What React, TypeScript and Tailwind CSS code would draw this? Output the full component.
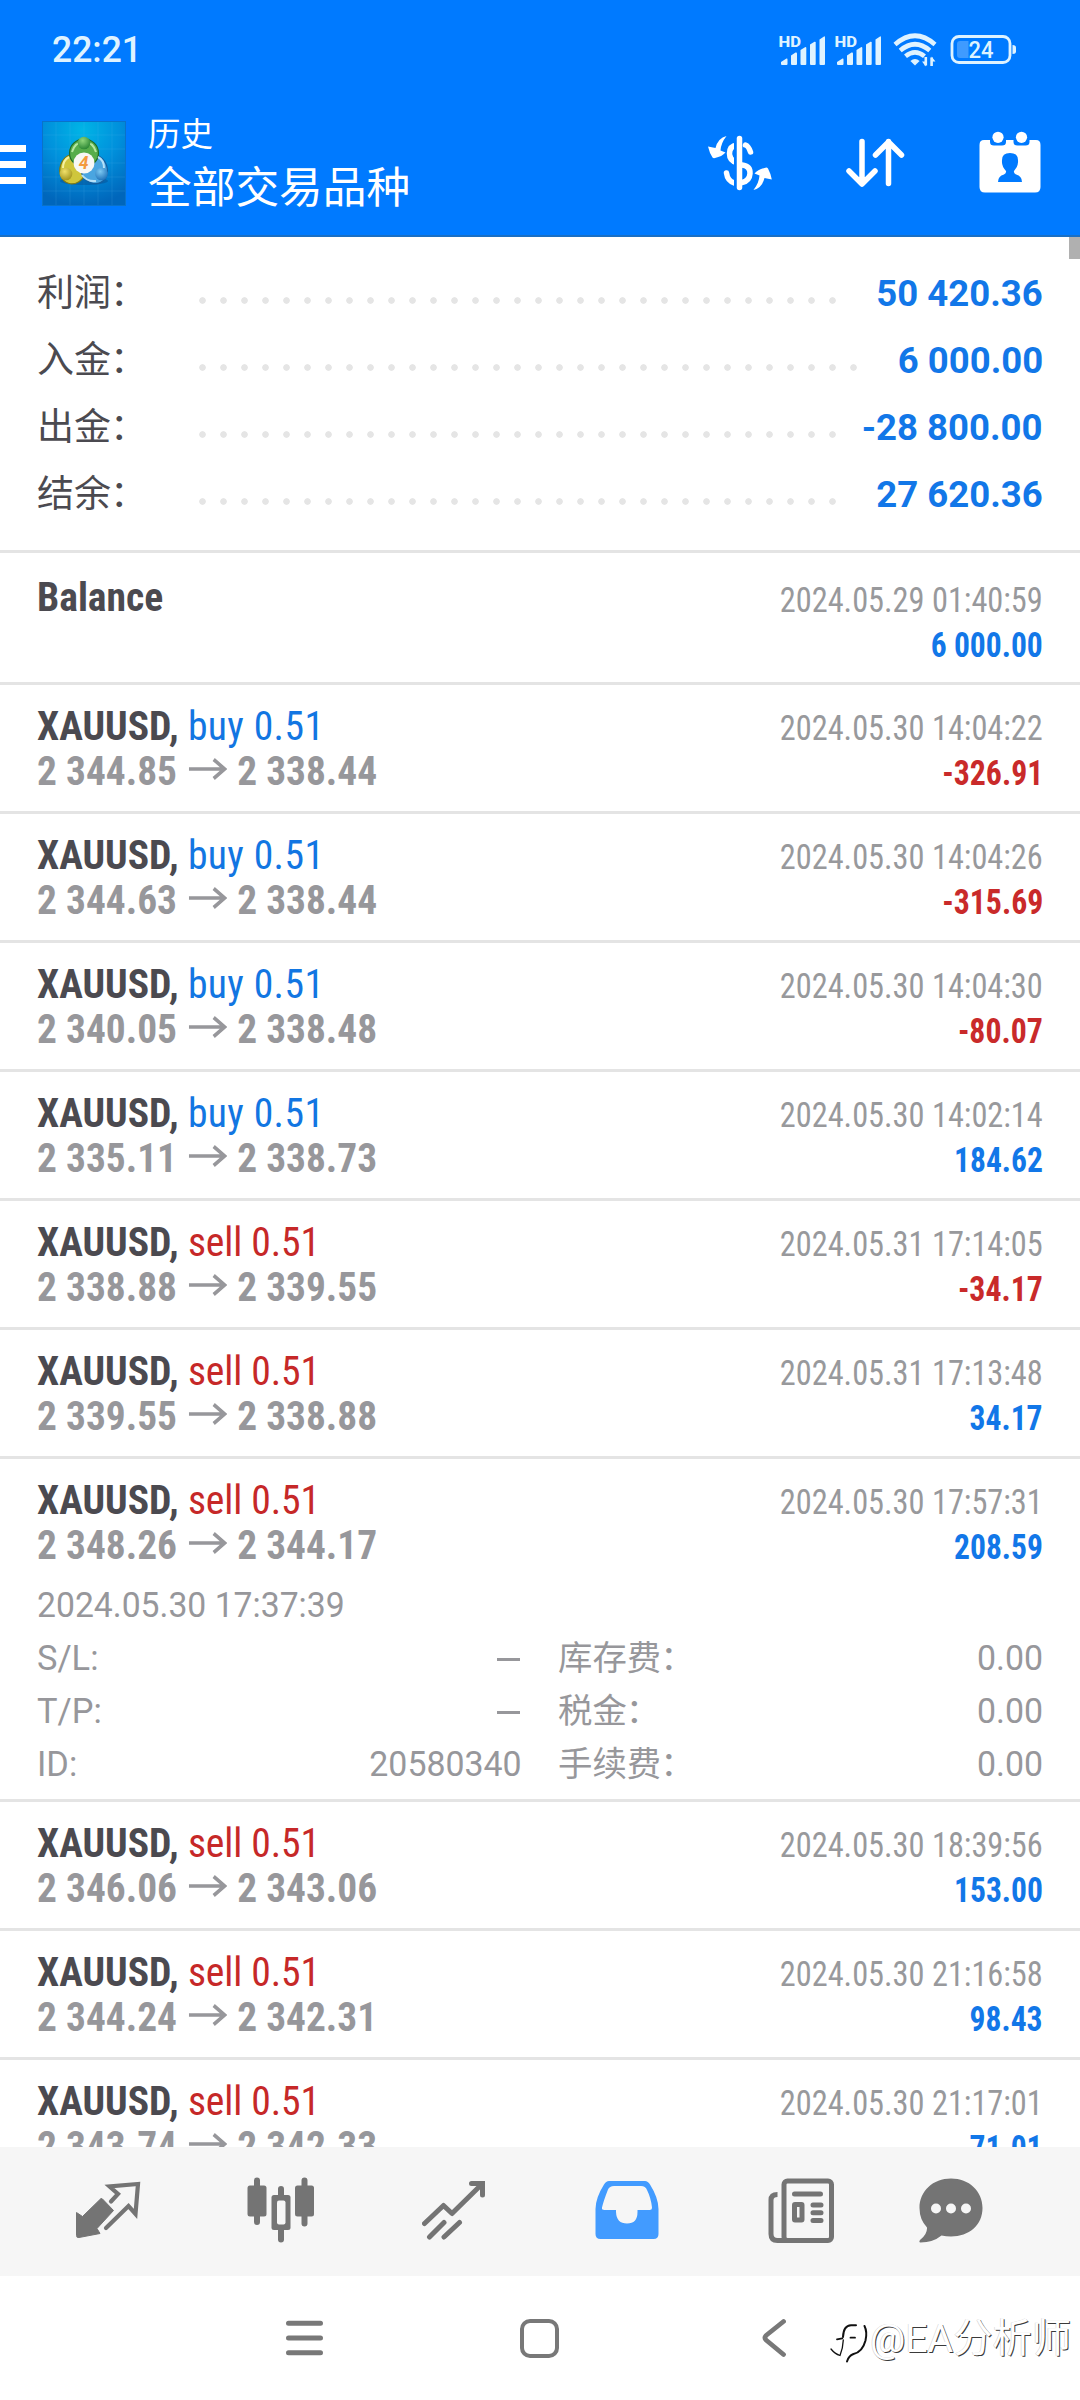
import React from "react";

type Kind = "buy" | "sell";
interface Deal {
  kind: Kind;
  from: string;
  to: string;
  date: string;
  profit: string;
  details?: boolean;
}

const summary = [
  { label: "利润", value: "50 420.36", width: "w-[651px]" },
  { label: "入金", value: "6 000.00", width: "w-[672px]" },
  { label: "出金", value: "-28 800.00", width: "w-[651px]" },
  { label: "结余", value: "27 620.36", width: "w-[651px]" },
];

const deals: Deal[] = [
  { kind: "buy", from: "2 344.85", to: "2 338.44", date: "2024.05.30 14:04:22", profit: "-326.91" },
  { kind: "buy", from: "2 344.63", to: "2 338.44", date: "2024.05.30 14:04:26", profit: "-315.69" },
  { kind: "buy", from: "2 340.05", to: "2 338.48", date: "2024.05.30 14:04:30", profit: "-80.07" },
  { kind: "buy", from: "2 335.11", to: "2 338.73", date: "2024.05.30 14:02:14", profit: "184.62" },
  { kind: "sell", from: "2 338.88", to: "2 339.55", date: "2024.05.31 17:14:05", profit: "-34.17" },
  { kind: "sell", from: "2 339.55", to: "2 338.88", date: "2024.05.31 17:13:48", profit: "34.17" },
  { kind: "sell", from: "2 348.26", to: "2 344.17", date: "2024.05.30 17:57:31", profit: "208.59", details: true },
  { kind: "sell", from: "2 346.06", to: "2 343.06", date: "2024.05.30 18:39:56", profit: "153.00" },
  { kind: "sell", from: "2 344.24", to: "2 342.31", date: "2024.05.30 21:16:58", profit: "98.43" },
  { kind: "sell", from: "2 343.74", to: "2 342.33", date: "2024.05.30 21:17:01", profit: "71.01" },
];

const Signal = () => (
  <svg width="46" height="32" viewBox="0 0 46 32" fill="#dff3ff">
    <text x="-0.5" y="13.2" fontSize="15" fontWeight="800" fontFamily="Roboto, sans-serif" textLength="22.5" lengthAdjust="spacingAndGlyphs">HD</text>
    <path d="M2 28 7.5 24.5Q8.5 24 8.5 25.5V30Q8.5 31 7.5 31H3Q2 31 2 30Z" />
    <path d="M12 21.5 16.5 18.5Q18 18 18 19.5V30Q18 31 17 31H13Q12 31 12 30Z" />
    <path d="M21.5 16 26 13.2Q27.3 12.8 27.3 14V30Q27.3 31 26.3 31H22.5Q21.5 31 21.5 30Z" />
    <path d="M31 10.5 35.5 7.8Q36.7 7.5 36.7 8.5V30Q36.7 31 35.7 31H32Q31 31 31 30Z" />
    <path d="M40.5 5.5 45 2.4Q46 2.2 46 3.2V30Q46 31 45 31H41.5Q40.5 31 40.5 30Z" />
  </svg>
);

const Wifi = () => (
  <svg width="44" height="34" viewBox="0 0 44 34" fill="none" stroke="#dff3ff" strokeWidth="4.6">
    <path d="M2 11.5Q22 -6 42 11.5" />
    <path d="M7.2 17.5Q22 5 36.8 17.5" />
    <path d="M12.5 23.3Q22 15.5 31.5 23.3" />
    <path d="M22 32.5 17.4 28Q22 24.2 26.6 28Z" fill="#dff3ff" stroke="none" />
    <path d="M32.8 24V32.5M38.6 33V24.5" strokeWidth="2.6" />
    <path d="M29 28.5 32.8 33.5V28.5ZM42.4 28.5 38.6 23.5V28.5Z" fill="#dff3ff" stroke="none" />
  </svg>
);

const Battery = () => (
  <svg width="67" height="30" viewBox="0 0 67 30" fill="none">
    <rect x="2" y="2.5" width="58" height="26" rx="7" stroke="#dff3ff" strokeWidth="2.8" />
    <path d="M62.5 11Q66 11 66 13.5V17.5Q66 20 62.5 20Z" fill="#dff3ff" />
    <path d="M18.5 7V24H10Q7 24 7 21V10Q7 7 10 7Z" fill="#3f9bff" />
    <text x="18.5" y="24" fontSize="24" fontWeight="500" fontFamily="Roboto, sans-serif" fill="#dff3ff" textLength="25" lengthAdjust="spacingAndGlyphs">24</text>
  </svg>
);

const AppLogo = () => (
  <svg width="84" height="85" viewBox="0 0 84 85">
    <defs>
      <radialGradient id="sky" cx="0.48" cy="0.1" r="0.9">
        <stop offset="0" stopColor="#00b5e6" />
        <stop offset="0.5" stopColor="#0090dc" />
        <stop offset="1" stopColor="#0066bb" />
      </radialGradient>
      <radialGradient id="gr" cx="0.4" cy="0.3" r="0.8">
        <stop offset="0" stopColor="#8fd67a" />
        <stop offset="1" stopColor="#1f7d2c" />
      </radialGradient>
      <radialGradient id="ye" cx="0.4" cy="0.3" r="0.8">
        <stop offset="0" stopColor="#f0e06a" />
        <stop offset="1" stopColor="#9a8d16" />
      </radialGradient>
      <radialGradient id="bl" cx="0.4" cy="0.3" r="0.8">
        <stop offset="0" stopColor="#7cc8f2" />
        <stop offset="1" stopColor="#1569b4" />
      </radialGradient>
    </defs>
    <rect x="0.5" y="0.5" width="83" height="84" fill="url(#sky)" stroke="#0a72c9" />
    <path d="M14 1V84M28 1V84M42 1V84M56 1V84M70 1V84M1 14H83M1 28H83M1 42H83M1 56H83M1 70H83" stroke="#5cc4f2" strokeOpacity="0.15" />
    <ellipse cx="42" cy="60" rx="24" ry="4" fill="#064f94" fillOpacity="0.5" />
    <ellipse cx="31" cy="48" rx="13" ry="15" fill="#cfc63c" stroke="#7d7a14" strokeWidth="1.2" transform="rotate(18 31 48)" />
    <ellipse cx="52" cy="48" rx="13" ry="15" fill="#4aa5e0" stroke="#155d9e" strokeWidth="1.2" transform="rotate(-25 52 48)" />
    <ellipse cx="42" cy="32" rx="14.5" ry="14" fill="#57ad4b" stroke="#1d6b2a" strokeWidth="1.2" />
    <path d="M30 31Q33 21 42 21T54 31" stroke="#b4e6a2" strokeWidth="2" fill="none" />
    <path d="M21 47Q21 39 27 36" stroke="#f5f0a0" strokeWidth="2" fill="none" />
    <path d="M62 47Q62 39 56 36M40 54Q45 61 54 60" stroke="#b5e0f8" strokeWidth="2" fill="none" />
    <circle cx="42" cy="22" r="6.3" fill="url(#gr)" />
    <circle cx="24" cy="53" r="6.3" fill="url(#ye)" />
    <circle cx="59.5" cy="53" r="6.3" fill="url(#bl)" />
    <circle cx="42" cy="42" r="10.5" fill="#f7f7f5" />
    <text x="41.5" y="48.3" textAnchor="middle" fontSize="17.5" fontWeight="700" fontStyle="italic" fontFamily="Roboto, sans-serif" fill="#f39a3d">4</text>
  </svg>
);

const DollarIcon = () => (
  <svg width="64" height="56" viewBox="0 0 64 56" fill="#fff">
    <path d="M18.5 1Q10 3 7.5 13L0 11.5Q1.5 18 4.5 22.5Q5.5 23.5 7 23Q14 21.5 17.5 17.5L12.5 15.5Q13 8 18.5 1Z" />
    <path d="M45.5 55Q54 53 56.5 43L63.800 44.5Q62.5 38 60 33.5Q59 32.2 57.5 32.7Q50 34.5 46.5 38.5L51.5 40.5Q51 48 45.5 55Z" />
    <path d="M29 10Q21.5 11 21.5 18.5T29 27.5M37.5 10Q40.5 11 42.5 17" stroke="#fff" strokeWidth="5.5" fill="none" strokeLinecap="round" />
    <path d="M18.5 38Q19.5 46 26.5 48M34 30Q42.5 31 42 38.5T34 47.5" stroke="#fff" strokeWidth="5.5" fill="none" strokeLinecap="round" />
    <path d="M22 21Q24 27 33 30" stroke="#fff" strokeWidth="5" fill="none" />
    <path d="M27.5 3V54" stroke="#007aff" strokeWidth="3" />
    <path d="M31.5 3.5V52.5" stroke="#fff" strokeWidth="5.5" strokeLinecap="round" />
  </svg>
);

const SortIcon = () => (
  <svg width="60" height="52" viewBox="0 0 60 52" fill="none" stroke="#fff" strokeWidth="5.5" strokeLinecap="round" strokeLinejoin="round">
    <path d="M17 4.5V46.5M4 34 17 47 30 34" />
    <path d="M43.5 46.5V4.5M30.5 18 43.5 5 56.5 18" />
  </svg>
);

const CalendarIcon = () => (
  <svg width="62" height="62" viewBox="0 0 62 62">
    <path d="M5 9H57Q61.5 9 61.5 14V56Q61.5 61.5 56 61.5H6Q0.5 61.5 0.5 56V14Q0.5 9 5 9Z" fill="#fff" />
    <path d="M11 6H27V11Q27 14.5 23 14.5H15Q11 14.5 11 11ZM34.5 6H50.5V11Q50.5 14.5 46.5 14.5H38.5Q34.5 14.5 34.5 11Z" fill="#007aff" />
    <circle cx="19" cy="6.3" r="5.6" fill="#fff" />
    <circle cx="42.5" cy="6.3" r="5.6" fill="#fff" />
    <path d="M31 22Q39.5 22 39 30Q39.5 35 35 40Q34.5 42 37 43.5Q43 45 43 51H19Q19 45 25 43.5Q27.5 42 27 40Q22.5 35 23 30Q22.5 22 31 22Z" fill="#007aff" />
  </svg>
);

const TradeIcon = () => (
  <svg width="66" height="58" viewBox="0 0 66 58">
    <path d="M27.5 18 38.5 29.5 22 47.5 25 52.5 4 56.5Q1.5 57 1.5 54.5V31.5L7.5 35.5 26 17.5Z" fill="#747474" stroke="#747474" strokeLinejoin="round" />
    <path d="M36 20.5 43 13 34.5 5.5 63 3 60.5 33 53.5 25 31 47" fill="none" stroke="#747474" strokeWidth="4.2" strokeLinecap="round" />
  </svg>
);

const CandlesIcon = () => (
  <svg width="68" height="66" viewBox="0 0 68 66" fill="#747474">
    <path d="M10 3.5V45M57.5 3.5V46.5M34 12V62.5" stroke="#747474" strokeWidth="6" strokeLinecap="round" />
    <rect x="0.5" y="8.5" width="19" height="31" rx="2.5" />
    <rect x="48" y="8.5" width="19" height="31" rx="2.5" />
    <rect x="24.5" y="18" width="19" height="35" rx="2.5" />
    <rect x="30" y="23.5" width="8.5" height="24" rx="2" fill="#f6f6f6" />
  </svg>
);

const TrendIcon = () => (
  <svg width="64" height="60" viewBox="0 0 64 60" fill="none" stroke="#747474" strokeWidth="5" strokeLinecap="round">
    <path d="M2.5 43.5 21.5 25.5 30 33.5 59 5" strokeLinejoin="round" />
    <path d="M49.5 3.5H60.5V15" strokeLinejoin="miter" />
    <path d="M7.5 57 22 42.5M22 57 37.5 42.5" />
  </svg>
);

const InboxIcon = () => (
  <svg width="64" height="60" viewBox="0 0 64 60">
    <path d="M14 1H50Q53 1 55 4.5Q63.5 18 63.5 29V54Q63.5 59 58.5 59H5.5Q0.5 59 0.5 54V29Q0.5 18 9 4.5Q11 1 14 1Z" fill="#429bff" />
    <path d="M19 6H46Q50.5 6 52 10Q56 18 57 27.5Q57 30 54.5 30H42.5V32Q42.5 43.5 32 43.5T21 32V30H9.5Q6.5 30 7 27.5Q8.5 21 13 9.5Q14.5 6 19 6Z" fill="#f6f6f6" />
  </svg>
);

const NewsIcon = () => (
  <svg width="66" height="65" viewBox="0 0 66 65" fill="none" stroke="#747474" strokeWidth="5">
    <rect x="16" y="3" width="47.5" height="59.5" rx="3.5" />
    <path d="M9.5 16.5Q3 16.5 3 22V56Q3 62.5 9.5 62.5H20" />
    <path d="M26.5 16H52.5M45 27H53M45 34.7H53M45 42.5H53" strokeLinecap="round" />
    <rect x="26.5" y="26.5" width="7.5" height="15.5" rx="0.5" />
  </svg>
);

const ChatIcon = () => (
  <svg width="64" height="65" viewBox="0 0 64 65">
    <path d="M32 0.5C50 0.5 63.5 13 63.5 30S50 58.5 32 58.5Q27 58.5 22.5 57.5Q14 64.5 1.5 64.5Q-0.5 64.5 1 62Q8.5 56.5 8 49.5Q0.5 41.5 0.5 30C0.5 13 14 0.5 32 0.5Z" fill="#747474" />
    <circle cx="17" cy="30.5" r="5" fill="#f6f6f6" />
    <circle cx="32" cy="30.5" r="5" fill="#f6f6f6" />
    <circle cx="47" cy="30.5" r="5" fill="#f6f6f6" />
  </svg>
);

const Arrow = () => (
  <svg width="40" height="22" viewBox="0 0 40 22" fill="none" stroke="#97979b" strokeWidth="3.6" className="ml-[12px] mr-[11px] inline-block align-[5px]">
    <path d="M0 11H37M26 1.5 37.5 11 26 20.5" />
  </svg>
);

const DetailPair = ({ label, value, dash, cjk }: { label: string; value?: string; dash?: boolean; cjk?: boolean }) => (
  <div className="flex h-[53px] items-center justify-between">
    <span>
      {label}
      {cjk && <span className="-ml-[1px]">：</span>}
    </span>
    {dash ? <span className="mt-[2px] mr-[2px] h-[3px] w-[23px] bg-[#97979b]" /> : <span className="origin-right scale-x-[.985]">{value}</span>}
  </div>
);

const DealRow = ({ d }: { d: Deal }) => (
  <div className="shrink-0 border-b-[3px] border-[#e4e4e4]">
    <div className="h-[126px] px-[37px] pt-[19px] font-['Roboto_Condensed',Roboto,sans-serif] leading-[45px]">
      <div className="flex h-[45px] items-baseline justify-between">
        <div className="origin-left scale-x-[.96] whitespace-nowrap text-[41.25px]">
          <span className="font-bold text-[#4b4a50]">XAUUSD, </span>
          {d.kind === "buy" ? <span className="tracking-[0.4px] text-[#1276e2]">buy 0.51</span> : <span className="tracking-[-0.1px] text-[#c62828]">sell 0.51</span>}
        </div>
        <div className="origin-right scale-x-[.94] whitespace-nowrap text-[34.4px] text-[#98999c]">{d.date}</div>
      </div>
      <div className="flex h-[45px] items-baseline justify-between">
        <div className="origin-left scale-x-[.955] whitespace-nowrap text-[41.25px] font-bold text-[#97979b]">
          {d.from}
          <Arrow />
          {d.to}
        </div>
        <div className={d.profit.startsWith("-") ? "origin-right scale-x-[.925] text-[34.4px] font-bold text-[#c92a2a]" : "origin-right scale-x-[.917] text-[34.4px] font-bold text-[#1277e8]"}>{d.profit}</div>
      </div>
    </div>
    {d.details && (
      <div className="-mt-[6px] h-[220px] px-[37px] text-[34.4px] leading-[53px] text-[#97979b]">
        <div className="h-[53px] origin-left scale-x-[.98]">2024.05.30 17:37:39</div>
        <div className="grid grid-cols-[485px_485px] justify-between">
          <DetailPair label="S/L:" dash />
          <DetailPair label="库存费" value="0.00" cjk />
          <DetailPair label="T/P:" dash />
          <DetailPair label="税金" value="0.00" cjk />
          <DetailPair label="ID:" value="20580340" />
          <DetailPair label="手续费" value="0.00" cjk />
        </div>
      </div>
    )}
  </div>
);

export default function App() {
  return (
    <div className="flex h-[2400px] w-[1080px] flex-col overflow-hidden bg-white font-['Roboto','Noto_Sans_CJK_SC',sans-serif]">
      <header className="relative flex h-[237px] shrink-0 flex-col border-b-2 border-[#1a6fc4] bg-[#007aff] text-white">
        <div className="flex h-[100px] items-center pl-[52px] pr-[63px]">
          <span className="origin-left scale-x-[.945] text-[37.5px] font-medium leading-none text-[#dff3ff]">22:21</span>
          <div className="ml-auto flex items-center">
            <Signal />
            <div className="ml-[10px]"><Signal /></div>
            <div className="ml-[12px]"><Wifi /></div>
            <div className="ml-[13px] -mt-[2px]"><Battery /></div>
          </div>
        </div>
        <div className="flex flex-1 items-center pb-[9px]">
          <div className="flex flex-col gap-[9px] pt-[3px]">
            <i className="h-[7px] w-[26px] bg-white" />
            <i className="h-[7px] w-[26px] bg-white" />
            <i className="h-[7px] w-[26px] bg-white" />
          </div>
          <div className="ml-4"><AppLogo /></div>
          <div className="ml-[22px] pt-[3px]">
            <div className="text-[32.5px] leading-[46px]">历史</div>
            <div className="text-[43.7px] leading-[60px]">全部交易品种</div>
          </div>
          <div className="ml-auto flex items-center pr-[39px]">
            <DollarIcon />
            <div className="ml-[73px]"><SortIcon /></div>
            <div className="ml-[74px] -mt-[2px]"><CalendarIcon /></div>
          </div>
        </div>
      </header>

      <main className="relative flex h-[1910px] shrink-0 flex-col overflow-hidden">
        <div className="absolute right-0 top-0 h-[22px] w-[11px] bg-[#b0b0b0]" />
        <section className="h-[316px] shrink-0 border-b-[3px] border-[#e4e4e4] pl-[37px] pr-[37px] pt-[23px]">
          {summary.map((s) => (
            <div key={s.label} className="flex h-[67px] items-center">
              <span className="w-[155px] text-[37px] leading-[67px] text-[#4b4a50]">
                {s.label}
                <span className="-ml-[1px]">：</span>
              </span>
              <span className={"mt-[14px] h-[7px] bg-[radial-gradient(circle_at_center,#e5e5e5_2.9px,transparent_3.7px)] bg-[length:21px_7px] " + s.width} />
              <span className="ml-auto origin-right scale-x-[.975] whitespace-nowrap text-[37.5px] font-bold leading-[67px] text-[#1277e8]">{s.value}</span>
            </div>
          ))}
        </section>

        <div className="flex h-[132px] shrink-0 justify-between border-b-[3px] border-[#e4e4e4] px-[37px] pt-[22px] font-['Roboto_Condensed',Roboto,sans-serif] leading-[45px]">
          <div className="origin-left scale-x-[.96] text-[41.25px] font-bold text-[#4b4a50]">Balance</div>
          <div className="pt-[3px] text-right text-[34.4px]">
            <div className="origin-right scale-x-[.94] text-[#98999c]">2024.05.29 01:40:59</div>
            <div className="origin-right scale-x-[.917] font-bold text-[#1277e8]">6 000.00</div>
          </div>
        </div>

        {deals.map((d) => (
          <DealRow key={d.date} d={d} />
        ))}
      </main>

      <nav className="flex h-[129px] shrink-0 items-center bg-[#f6f6f6] pb-[3px] pl-[75px]">
        <div className="w-[172px]"><TradeIcon /></div>
        <div className="w-[175px]"><CandlesIcon /></div>
        <div className="w-[173px]"><TrendIcon /></div>
        <div className="w-[173px]"><InboxIcon /></div>
        <div className="w-[151px]"><NewsIcon /></div>
        <ChatIcon />
      </nav>

      <footer className="relative flex flex-1 items-center pl-[286px]">
        <svg width="37" height="36" viewBox="0 0 37 36" stroke="#787878" strokeWidth="5" strokeLinecap="round">
          <path d="M2.5 3.3H34.5M2.5 18H34.5M2.5 32.7H34.5" />
        </svg>
        <div className="ml-[197px] h-[39px] w-[39px] rounded-[10px] border-[4.5px] border-[#787878]" />
        <svg width="24" height="40" viewBox="0 0 24 40" fill="none" stroke="#787878" strokeWidth="4.8" strokeLinecap="round" strokeLinejoin="round" className="ml-[203px]">
          <path d="M21.5 3.5 4 17.5Q2 19.8 4 22L21.5 36.5" />
        </svg>
        <div className="absolute left-[829px] top-[38px] flex items-center">
          <svg width="41" height="50" viewBox="0 0 41 50" fill="none" stroke="#111" strokeLinecap="round">
            <path d="M14 23Q14.5 11.5 22 11.3H27" strokeWidth="2" />
            <path d="M21.5 23.7H26M8 25.3 13.3 24.3" strokeWidth="1.8" />
            <path d="M14.3 26Q14 34 11 41.5Q6 40 2 35" strokeWidth="1.3" />
            <path d="M35.5 12Q38.5 18 36.5 26.5Q33.5 38 24.5 40Q19.5 42 18 47.5" strokeWidth="2" />
          </svg>
          <span className="whitespace-nowrap text-[39.3px] leading-[46px] text-white [text-shadow:1px_1px_0_#3a3a3a,-0.5px_-0.5px_0_#d0d0d0]">@EA分析师</span>
        </div>
      </footer>
    </div>
  );
}
